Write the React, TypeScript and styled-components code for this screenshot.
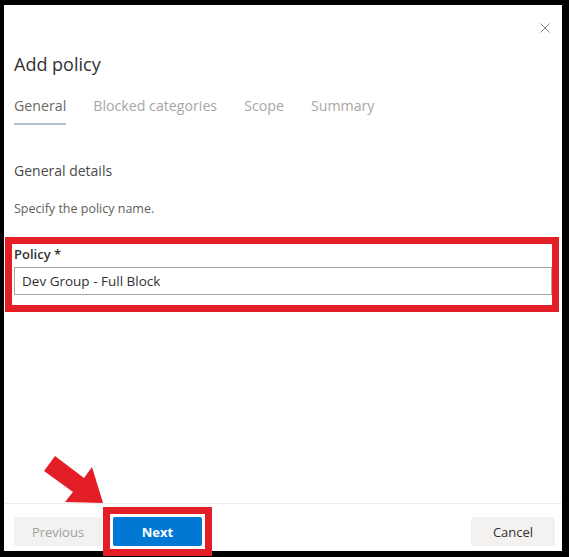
import styled, { createGlobalStyle } from "styled-components";

const GlobalStyle = createGlobalStyle`
  html, body {
    margin: 0;
    padding: 0;
    background: #000;
  }
  body {
    font-family: "Open Sans", "Noto Sans", Arial, sans-serif;
  }
  * {
    box-sizing: border-box;
  }
`;

const Frame = styled.div`
  position: relative;
  width: 569px;
  height: 557px;
  padding: 5px 7px 6px 4px;
  background: #000;
`;

const Panel = styled.div`
  display: flex;
  flex-direction: column;
  height: 100%;
  background: #fff;
`;

const TopBar = styled.div`
  display: flex;
  justify-content: flex-end;
  padding: 18px 12px 0 0;
  height: 28px;
`;

const CloseButton = styled.button`
  display: flex;
  align-items: center;
  justify-content: center;
  width: 10px;
  height: 10px;
  padding: 0;
  border: 0;
  background: transparent;
  cursor: pointer;
`;

const Body = styled.div`
  display: flex;
  flex-direction: column;
  padding: 0 10px;
`;

const Title = styled.h1`
  margin: 19px 0 0;
  font-size: 18px;
  line-height: 24px;
  font-weight: 400;
  color: #323130;
`;

const Tabs = styled.div`
  display: flex;
  gap: 27px;
  margin-top: 20px;
`;

const Tab = styled.div<{ $active?: boolean }>`
  font-size: 14.2px;
  line-height: 20px;
  padding-bottom: 7px;
  color: ${(p) => (p.$active ? "#6b6a68" : "#a8a7a5")};
  border-bottom: 2px solid ${(p) => (p.$active ? "#aec2d2" : "transparent")};
  cursor: pointer;
`;

const SectionTitle = styled.h2`
  margin: 36px 0 0;
  font-size: 14px;
  line-height: 20px;
  font-weight: 400;
  color: #4a4948;
`;

const Hint = styled.p`
  margin: 19px 0 0;
  font-size: 12.5px;
  line-height: 18px;
  color: #605e5c;
`;

const HighlightBox = styled.div`
  margin: 19px -7px 0 -9px;
  padding: 1px 0 10px 2px;
  border: 7px solid #e31e26;
`;

const Label = styled.label`
  display: block;
  font-size: 13px;
  line-height: 18px;
  font-weight: 600;
  color: #323130;
`;

const Input = styled.input`
  display: block;
  width: 100%;
  height: 28px;
  margin-top: 4px;
  padding: 0 7px;
  border: 1px solid #a8a7a5;
  border-radius: 0;
  font-family: inherit;
  font-size: 13.5px;
  color: #323130;
  background: #fff;
  outline: none;
`;

const Footer = styled.div`
  display: flex;
  justify-content: space-between;
  align-items: center;
  margin-top: auto;
  padding: 13px 7px 5px 10px;
  border-top: 1px solid #eeedeb;
`;

const ButtonGroup = styled.div`
  display: flex;
  gap: 11px;
`;

const ButtonHighlight = styled.div`
  display: flex;
  margin: -10px;
  padding: 3px;
  border: 7px solid #e31e26;
`;

const Button = styled.button<{ $primary?: boolean; $width: number }>`
  width: ${(p) => p.$width}px;
  height: 29px;
  border: 0;
  border-radius: 2px;
  font-family: inherit;
  font-size: 13px;
  font-weight: ${(p) => (p.$primary ? 700 : 400)};
  color: ${(p) => (p.$primary ? "#fff" : p.disabled ? "#a19f9d" : "#323130")};
  background: ${(p) => (p.$primary ? "#0078d4" : "#f3f2f1")};
  cursor: ${(p) => (p.disabled ? "default" : "pointer")};
`;

const Annotation = styled.svg`
  position: absolute;
  left: 0;
  top: 0;
  width: 569px;
  height: 557px;
  pointer-events: none;
`;

export default function App() {
  return (
    <>
      <GlobalStyle />
      <Frame>
        <Panel>
          <TopBar>
            <CloseButton aria-label="Close">
              <svg width="10" height="10" viewBox="0 0 10 10">
                <path d="M0.5 0.5 L9.5 9.5 M9.5 0.5 L0.5 9.5" stroke="#8a8886" strokeWidth="1" />
              </svg>
            </CloseButton>
          </TopBar>
          <Body>
            <Title>Add policy</Title>
            <Tabs>
              <Tab $active>General</Tab>
              <Tab>Blocked categories</Tab>
              <Tab>Scope</Tab>
              <Tab>Summary</Tab>
            </Tabs>
            <SectionTitle>General details</SectionTitle>
            <Hint>Specify the policy name.</Hint>
            <HighlightBox>
              <Label htmlFor="policy">Policy *</Label>
              <Input id="policy" defaultValue="Dev Group - Full Block" />
            </HighlightBox>
          </Body>
          <Footer>
            <ButtonGroup>
              <Button $width={88} disabled>
                Previous
              </Button>
              <ButtonHighlight>
                <Button $width={89} $primary>
                  Next
                </Button>
              </ButtonHighlight>
            </ButtonGroup>
            <Button $width={84}>Cancel</Button>
          </Footer>
        </Panel>
        <Annotation viewBox="0 0 569 557">
          <polygon
            points="55,456 44,471 73,492 65,502 103,503 92,467 84,478"
            fill="#e31e26"
          />
        </Annotation>
      </Frame>
    </>
  );
}
